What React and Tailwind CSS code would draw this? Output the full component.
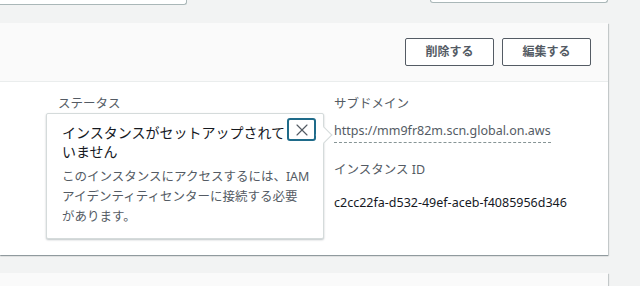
import React from "react";
import { X } from "lucide-react";

const font = { fontFamily: '"Noto Sans", "Noto Sans CJK JP", sans-serif' };

const Button = ({ children }) => (
  <button className="h-[28px] w-[89px] rounded-[2px] border border-[#545b64] bg-white text-[12px] font-bold text-[#545b64]">
    {children}
  </button>
);

const Popover = () => (
  <div className="absolute left-[-12px] top-[17px] w-[278px] rounded-[2px] border border-[#d5dbdb] bg-white shadow-[0_1px_2px_rgba(0,28,36,0.25)]">
    {/* caret */}
    <div className="absolute right-[-7px] top-[15px] h-[12px] w-[12px] rotate-45 border-r border-t border-[#d5dbdb] bg-white" />
    <div className="flex items-start pl-[15px] pr-[7px] pt-[4px]">
      <div className="flex-1 pt-[5px] text-[14px] leading-[19px] text-[#16191f]">
        インスタンスがセットアップされて
        <br />
        いません
      </div>
      <button className="flex h-[23px] w-[29px] items-center justify-center rounded-[3px] border-2 border-[#1f6b8a] bg-white text-[#545b64]">
        <X size={20} strokeWidth={1.4} />
      </button>
    </div>
    <p className="whitespace-nowrap px-[15px] pb-[11px] pt-[6px] text-[12.5px] leading-[20px] text-[#545b64]">
      このインスタンスにアクセスするには、IAM
      <br />
      アイデンティティセンターに接続する必要
      <br />
      があります。
    </p>
  </div>
);

export default function App() {
  return (
    <div className="relative h-[286px] w-[640px] overflow-hidden bg-[#f2f3f3]" style={font}>
      <div className="flex h-[23px] items-start">
        <div className="h-[5px] w-[187px] rounded-br-[3px] border border-l-0 border-t-0 border-[#aab7b8] bg-white" />
        <div className="ml-[243px] h-[3px] w-[178px] rounded-b-[3px] border border-t-0 border-[#aab7b8] bg-white" />
      </div>

      <div className="w-[608px] bg-white shadow-[0_1px_1px_0_rgba(0,28,36,0.3),1px_1px_1px_0_rgba(0,28,36,0.15)]">
        <div className="flex h-[59px] justify-end gap-[8px] border-b border-[#eaeded] bg-[#fafafa] pr-[17px] pt-[15px]">
          <Button>削除する</Button>
          <Button>編集する</Button>
        </div>
        <div className="flex h-[173px] pl-[58px] pt-[14px]">
          <div className="relative w-[276px]">
            <div className="text-[12.5px] leading-[16px] text-[#545b64]">ステータス</div>
            <Popover />
          </div>
          <div className="w-[250px] text-[12.5px]">
            <div className="leading-[16px] text-[#545b64]">サブドメイン</div>
            <div className="mt-[11px] inline-block border-b border-dashed border-[#879596] pb-[3px] leading-[16px] text-[#545b64]">
              https://mm9fr82m.scn.global.on.aws
            </div>
            <div className="mt-[19px] leading-[16px] text-[#545b64]">インスタンス ID</div>
            <div className="mt-[17px] leading-[16px] text-[#16191f]">c2cc22fa-d532-49ef-aceb-f4085956d346</div>
          </div>
        </div>
      </div>

      <div className="mt-[18px] h-[20px] w-[608px] bg-[#fafafa] shadow-[0_1px_1px_0_rgba(0,28,36,0.3),1px_1px_1px_0_rgba(0,28,36,0.15)]" />
    </div>
  );
}
